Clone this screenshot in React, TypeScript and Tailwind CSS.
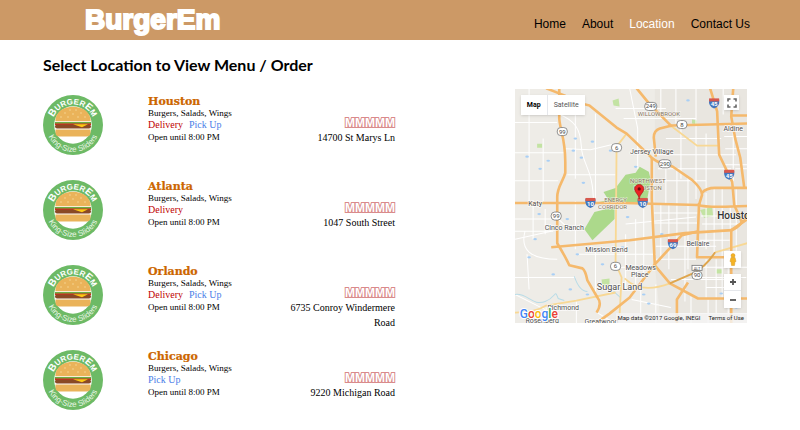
const navItems = ["Home", "About", "Location", "Contact Us"];

type Place = {
  city: string;
  delivery: boolean;
  pickUp: boolean;
  address: string;
};

const places: Place[] = [
  { city: "Houston", delivery: true, pickUp: true, address: "14700 St Marys Ln" },
  { city: "Atlanta", delivery: true, pickUp: false, address: "1047 South Street" },
  { city: "Orlando", delivery: true, pickUp: true, address: "6735 Conroy Windermere Road" },
  { city: "Chicago", delivery: false, pickUp: true, address: "9220 Michigan Road" },
];

function Logo({ id }: { id: string }) {
  return (
    <svg viewBox="0 0 60 60" className="size-[60px] shrink-0" role="img" aria-label="BurgerEm King-Size Sliders">
      <circle cx="30" cy="30" r="30" fill="#6dba66" />
      <circle cx="30" cy="30" r="18.8" fill="#fff" />
      <path d="M12.3 26.300C12 7 48 7 47.700 26.300Z" fill="#eab35a" />
      <g fill="#f8dda0">
        <circle cx="22" cy="18" r=".7" /><circle cx="27" cy="15" r=".7" /><circle cx="33" cy="15" r=".7" />
        <circle cx="38" cy="18" r=".7" /><circle cx="30" cy="19" r=".7" /><circle cx="18" cy="22" r=".7" />
        <circle cx="25" cy="22" r=".7" /><circle cx="35" cy="22" r=".7" /><circle cx="42" cy="22" r=".7" />
      </g>
      <path d="M12 27h36v2H12z" fill="#6cae45" />
      <path d="M12 28.500h36v1.500H12z" fill="#d9271c" />
      <rect x="12" y="29.500" width="36" height="4" rx="2" fill="#8a4a25" />
      <path d="M30 29.300h15l-6 3z" fill="#fdc913" />
      <path d="M12.500 34.500h35v3q0 4-4 4h-27q-4 0-4-4z" fill="#eab35a" />
      <path id={`ring-${id}`} d="M14.300 44.300A21 21 0 1 1 45.700 44.300" fill="none" />
      <path id={`bottom-${id}`} d="M3 30A27 27 0 0 0 57 30" fill="none" />
      <text fill="#fff" fontSize="8" fontWeight="700" fontFamily="Liberation Sans, sans-serif" textAnchor="middle">
        <textPath href={`#ring-${id}`} startOffset="50%">
          <tspan fontSize="10">B</tspan>URGER<tspan fontSize="10">E</tspan>M
        </textPath>
      </text>
      <text fill="#eaf7e8" fontSize="8" fontFamily="Liberation Sans, sans-serif" textAnchor="middle">
        <textPath href={`#bottom-${id}`} startOffset="50%">King-Size Sliders</textPath>
      </text>
    </svg>
  );
}

function PlaceRow({ place }: { place: Place }) {
  return (
    <li className="flex min-h-[85px] items-start gap-[45px]">
      <Logo id={place.city} />
      <div className="min-w-0 flex-1">
        <div className="flex items-end justify-between">
          <div className="leading-[11px]">
            <h2 className="font-['DejaVu_Serif'] text-[11px] leading-[13px] font-bold text-[#cc6600] [-webkit-text-stroke:thin_#cc6600]">
              {place.city}
            </h2>
            <p className="text-[9px]">Burgers, Salads, Wings</p>
            <p className="flex gap-[6px] text-[10px]">
              {place.delivery && <span className="text-[#c00000]">Delivery</span>}
              {place.pickUp && <span className="text-[#4a7ee8]">Pick Up</span>}
            </p>
          </div>
          <span className="font-['Liberation_Sans'] text-xs leading-[14px] font-bold text-white [-webkit-text-stroke:2px_#d98a8a] [paint-order:stroke]">
            MMMMM
          </span>
        </div>
        <div className="flex justify-between leading-[15px]">
          <p className="text-[9px]">Open until 8:00 PM</p>
          <address className="w-[108px] text-right text-[10px] not-italic">{place.address}</address>
        </div>
      </div>
    </li>
  );
}

const waterSpots = [
  [12, 68], [25, 80], [33, 72], [60, 50], [58, 62], [66, 69], [95, 62], [77, 53], [24, 125], [52, 130],
  [62, 165], [38, 185], [20, 150], [55, 200], [72, 205], [120, 78], [128, 205], [133, 214], [172, 12],
  [205, 204], [146, 145], [112, 128], [45, 140], [14, 168], [87, 175], [220, 218], [107, 158], [68, 94],
];

const minorRoads = [
  "M0 34H42M0 64H50M14 0V114M28 50V112M0 92H43M50 60L75 61L100 55M60 20V90M80 25V112M52 86H100",
  "M42 25C60 32 65 40 66 58S78 80 78 114M0 142H38M10 142C5 160 15 170 42 170M12 165L14 200M0 188H60",
  "M114 0L122 40V80M100 20H150M108 30H180M145 0V30M160 0V35M180 0V110M165 40V90M150 50H205M140 66H220",
  "M142 80H215M140 92H190M150 70V115M161 80V150M172 88V180M190 45V100M207 0V26M217 40V100M207 76H231",
  "M138 124H184M138 134H182M110 135L180 128M145 115V170M153 115V180M169 145V212M140 157H200M140 170H180",
  "M190 104V160M198 100V165M206 100V210M214 118V165M185 127H220M186 135H222M184 151H215M155 190H225",
  "M190 170V209M200 170V230M212 168V230M182 178H231M186 188H230M190 198H220M110 145V200M120 130V200",
  "M128 120V190M100 165H140M105 178H140M60 112V160M80 160V205M62 165H100M18 112V150M30 120V145M0 130H40",
  "M0 150L36 142M56 142L40 127M116 210L155 218M125 200V234M140 195V234M175 207V234M160 224H231M192 210V234",
  "M0 205L30 220M31 218V234M61 212V234M80 222L100 234M220 100V170M208 48H231M209 60H231M219 80H231",
];

const highways = [
  "M31 0L49 7C56 11 63 15 74 17L101 39L111 45L136 69C144 76 151 75 157 78L176 91Q186 100 186 106L183 116",
  "M44 0V30C45 43 50 50 50 73V84C48 92 42 98 42 108V154C48 164 51 169 54 176L67 179Q70 181 72 191L82 208Q87 214 81 223",
  "M121 0L134 16L156 38",
  "M140 68L138 49Q138 42 144 40L156 37L231 35",
  "M136 69V110L139 176L154 194L182 209H231",
  "M194 0L201 23L203 66L216 93L218 116L226 134",
  "M217 0L215 28L219 50L224 69L228 99M215 27H231",
  "M186 104Q190 99 199 99H231M183 114L181 168H209L222 172",
  "M0 114H109L182 116Q190 119 231 117",
  "M36 158L114 151L169 144L216 141Q224 138 231 125",
  "M80 234L94 224L114 208L139 175L166 146L183 142",
  "M161 234V210L172 193M231 130L215 141V234",
];

const secondary = [
  "M156 38L181 57H202",
  "M111 45L101 58L100 174L106 188L104 225",
  "M0 223Q20 223 31 216L61 211L100 203",
  "M109 189Q125 205 154 194M199 163L231 154",
];

type Label = [string, number, number, number];
const labels: Label[] = [
  ["Jersey Village", 136, 65, 7], ["Aldine", 217, 42, 7], ["Katy", 20, 117, 7],
  ["Cinco Ranch", 49, 141, 7], ["Mission Bend", 91, 163, 7], ["Bellaire", 182, 157, 7],
  ["Meadows", 125, 181, 7], ["Place", 124, 188, 7], ["Richmond", 48, 220, 7],
  ["Rosenberg", 27, 233, 7], ["Greatwood", 86, 234, 7], ["Sugar Land", 104, 201, 9],
];
const areaLabels: Label[] = [
  ["WILLOWBROOK", 143, 28, 6], ["NORTHWEST", 132, 94, 6], ["HOUSTON", 132, 101, 6],
  ["ENERGY", 100, 113, 6], ["CORRIDOR", 97, 120, 6],
];
const routes: [string, number, number][] = [
  ["99", 47, 43], ["6", 101, 59], ["249", 135, 18], ["8", 166, 36], ["290", 149, 75],
  ["99", 41, 127], ["6", 100, 177], ["90", 181, 186],
];
const interstates: [string, number, number][] = [
  ["45", 198, 15], ["45", 213, 86], ["10", 75, 114], ["10", 127, 114], ["69", 157, 155],
];

function MapDrawing() {
  return (
    <svg
      viewBox="0 0 231 234"
      preserveAspectRatio="xMidYMid slice"
      className="block h-[234px] w-full"
      fontFamily="Roboto, sans-serif"
      role="img"
      aria-label="Map of Houston"
    >
      <rect width="231" height="234" fill="#eeece7" />
      <path d="M139 0H231V234H145L139 176Z" fill="#e9e6e0" />
      <g fill="#c3e3a3">
        <path d="M84 113L93 111L88 103L100 99L110 86L120 84L124 78L133 83L135 91L131 113Z" fill="#acd98b" />
        <path d="M69 140L79 123L99 118L99 130L77 151Z" fill="#acd98b" />
        <path d="M184 121L196 118L197 127L188 129ZM97 12L103 10L104 18L98 17ZM22 55h5v4h-5zM86 190l8-1v7l-7 1zM176 31l5 1v4l-5-1zM200 180h6v4h-6z" />
      </g>
      <g fill="none" stroke="#fff" strokeWidth="1">
        {minorRoads.map((d) => <path key={d} d={d} />)}
      </g>
      <g fill="#a9cff5">
        {waterSpots.map(([x, y]) => <ellipse key={`${x}-${y}`} cx={x} cy={y} rx="1.800" ry="1.100" />)}
      </g>
      <path d="M0 205C12 203 18 217 30 212S39 199 43 209L49 211M59 187Q64 202 72 202M98 202l7 6" fill="none" stroke="#b7dbe7" />
      <g fill="none" stroke="#f8d894" strokeWidth="1.800">
        {secondary.map((d) => <path key={d} d={d} />)}
      </g>
      <g fill="none" stroke="#f5b96c" strokeWidth="2.600" strokeLinejoin="round">
        {highways.map((d) => <path key={d} d={d} />)}
      </g>
      <path d="M154 194L177 184Q189 178 199 163" fill="none" stroke="#dfa64e" strokeWidth="2" />
      {routes.map(([n, x, y]) => (
        <g key={`${n}-${x}`}>
          <rect x={x - (n.length > 2 ? 6 : 5)} y={y - 4} width={n.length > 2 ? 12 : 10} height="8" rx="3.500" fill="#fff" stroke="#777" strokeWidth=".8" />
          <text x={x} y={y + 2} fontSize="6" fill="#444" textAnchor="middle">{n}</text>
        </g>
      ))}
      <rect x="176" y="176" width="10" height="5" fill="#fff" stroke="#777" strokeWidth=".8" />
      <text x="181" y="180.500" fontSize="4" fill="#444" textAnchor="middle">ALT</text>
      {interstates.map(([n, x, y]) => (
        <g key={`${n}-${x}-${y}`}>
          <path d={`M${x - 5} ${y - 4}H${x + 5}Q${x + 6} ${y + 3} ${x} ${y + 5}Q${x - 6} ${y + 3} ${x - 5} ${y - 4}`} fill="#4477bd" />
          <path d={`M${x - 5} ${y - 5}H${x + 5}V${y - 2}H${x - 5}Z`} fill="#d8574c" />
          <text x={x} y={y + 3} fontSize="6" fontWeight="700" fill="#fff" textAnchor="middle">{n}</text>
        </g>
      ))}
      <g fill="#505050" stroke="#fff" strokeWidth="1.500" strokeOpacity=".8" paintOrder="stroke" textAnchor="middle">
        {labels.map(([text, x, y, size]) => <text key={text} x={x} y={y} fontSize={size}>{text}</text>)}
      </g>
      <g fill="#85735b" stroke="#fff" strokeWidth="1" strokeOpacity=".7" paintOrder="stroke" textAnchor="middle">
        {areaLabels.map(([text, x, y, size]) => <text key={text} x={x} y={y} fontSize={size}>{text}</text>)}
      </g>
      <text x="201" y="130" fontSize="10" fontWeight="500" fill="#333" stroke="#fff" strokeOpacity=".8" paintOrder="stroke">Houston</text>
      <path d="M123.500 110C123 105 119 104 119 100A4.500 4.500 0 0 1 128 100C128 104 124 105 123.500 110Z" fill="#ea2424" stroke="#9e1717" strokeWidth=".6" />
      <circle cx="123.500" cy="100" r="1.600" fill="#6a0c0c" />
    </svg>
  );
}

function MapPanel() {
  return (
    <section aria-label="Map" className="relative w-[33%] shrink-0 self-start overflow-hidden font-[Roboto,sans-serif]">
      <MapDrawing />
      <div className="absolute top-[6px] left-[6px] flex h-5 bg-white text-[7px] shadow-sm">
        <button type="button" className="w-[27px] border-r border-gray-200 font-bold text-black">Map</button>
        <button type="button" className="w-[37px] text-[#565656]">Satellite</button>
      </div>
      <button type="button" aria-label="Full screen" className="absolute top-[6px] right-2 flex size-[15px] items-center justify-center bg-white shadow-sm">
        <svg viewBox="0 0 10 10" className="size-[10px]" fill="none" stroke="#666" strokeWidth="1.600">
          <path d="M1 3.500V1h2.500M6.500 1H9v2.500M9 6.500V9H6.500M3.500 9H1V6.500" />
        </svg>
      </button>
      <div className="absolute right-[6px] bottom-[15px] flex w-[17px] flex-col gap-[6px]">
        <button type="button" aria-label="Street view" className="flex h-[17px] items-center justify-center bg-white shadow-sm">
          <svg viewBox="0 0 10 13" className="h-[13px] w-[10px]" fill="#f5b324">
            <circle cx="5" cy="2.500" r="2" stroke="#c98a18" strokeWidth=".4" />
            <path d="M3 4.500h4L8 8.500H7L6.500 12.500h-3L3 8.500H2Z" stroke="#d59824" strokeWidth=".5" />
          </svg>
        </button>
        <div className="flex flex-col divide-y divide-gray-200 bg-white shadow-sm">
          <button type="button" aria-label="Zoom in" className="flex h-[17px] items-center justify-center">
            <svg viewBox="0 0 8 8" className="size-2" stroke="#555" strokeWidth="1.800"><path d="M1 4h6M4 1v6" /></svg>
          </button>
          <button type="button" aria-label="Zoom out" className="flex h-[17px] items-center justify-center">
            <svg viewBox="0 0 8 8" className="size-2" stroke="#555" strokeWidth="1.800"><path d="M1 4h6" /></svg>
          </button>
        </div>
      </div>
      <span className="absolute bottom-px left-[5px] text-xs leading-[15px] font-medium [-webkit-text-stroke:2px_white] [paint-order:stroke]">
        <span className="text-[#4285f4]">G</span><span className="text-[#ea4335]">o</span><span className="text-[#fbbc05]">o</span><span className="text-[#4285f4]">g</span><span className="text-[#34a853]">l</span><span className="text-[#ea4335]">e</span>
      </span>
      <div className="absolute right-0 bottom-0 flex h-[10px] items-center gap-2 bg-[#f5f5f5]/80 pr-[3px] pl-px text-[6px] leading-[10px] whitespace-nowrap text-[#222]">
        <span>Map data ©2017 Google, INEGI</span>
        <a href="#terms">Terms of Use</a>
      </div>
    </section>
  );
}

export default function App() {
  return (
    <div className="min-h-screen bg-white font-['Liberation_Serif',serif] text-black">
      <header className="flex h-10 items-center justify-between bg-[#cc9966] pr-[50px] pl-[85px] font-['Liberation_Sans',sans-serif]">
        <a href="#home" className="text-[28px] leading-10 font-bold text-white [-webkit-text-stroke:2px_white]">
          BurgerEm
        </a>
        <nav className="flex gap-4 pt-2 text-xs leading-4">
          {navItems.map((item) => (
            <a key={item} href="#nav" className={item === "Location" ? "text-white" : "text-black"}>
              {item}
            </a>
          ))}
        </nav>
      </header>
      <main className="pt-[15px] pr-[53px] pb-2 pl-[43px]">
        <h1 className="font-[Lato,sans-serif] text-base leading-5 font-bold">Select Location to View Menu / Order</h1>
        <div className="flex justify-between pt-[14px]">
          <ul className="w-1/2 pt-[6px]">
            {places.map((place) => <PlaceRow key={place.city} place={place} />)}
          </ul>
          <MapPanel />
        </div>
      </main>
    </div>
  );
}
